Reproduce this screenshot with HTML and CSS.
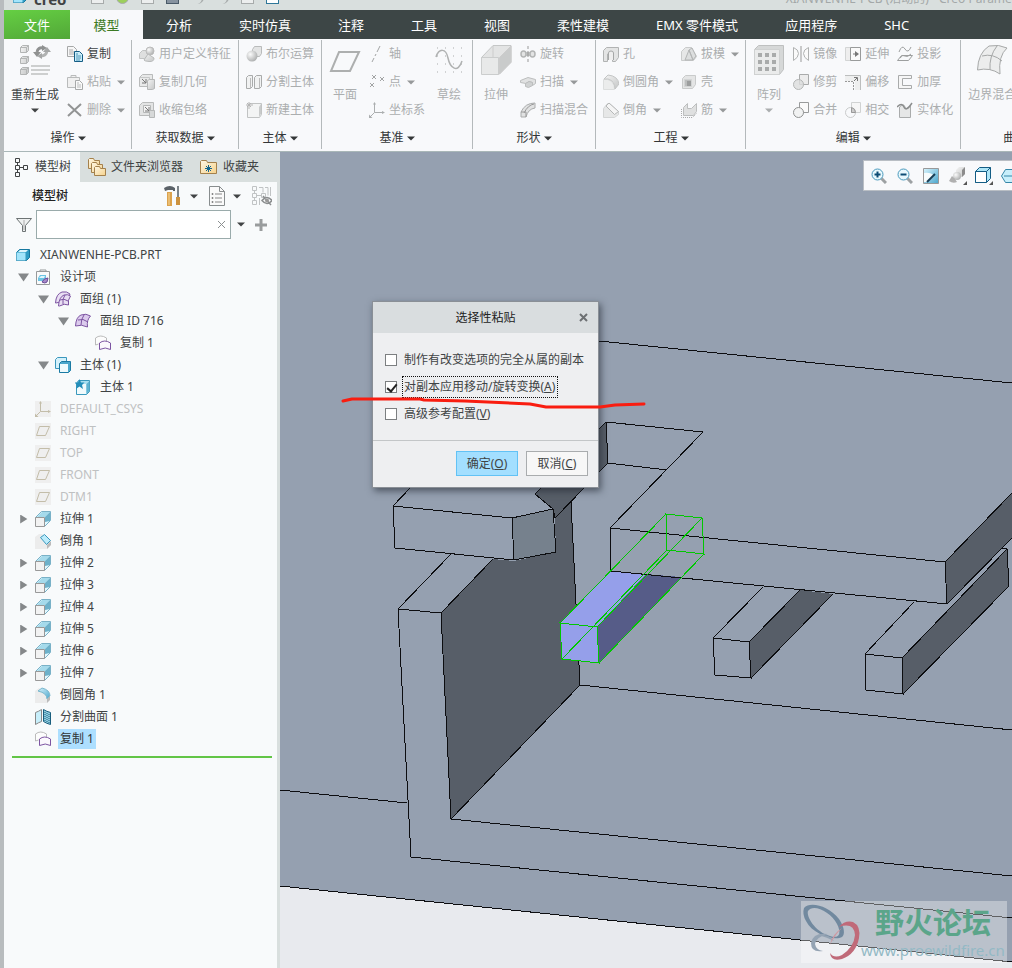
FILE: index.html
```html
<!DOCTYPE html>
<html lang="zh-CN">
<head>
<meta charset="utf-8">
<title>XIANWENHE-PCB (活动的) - Creo Parametric</title>
<link rel="stylesheet" href="styles.css">
</head>
<body>
<svg class="sprite" aria-hidden="true">
  <defs>
    <linearGradient id="g-grey" x1="0" y1="0" x2="1" y2="1"><stop offset="0" stop-color="#f4f4f4"/><stop offset="1" stop-color="#c4c6c6"/></linearGradient>
    <linearGradient id="g-blue" x1="0" y1="0" x2="1" y2="1"><stop offset="0" stop-color="#d8f4fd"/><stop offset="1" stop-color="#4aa5cc"/></linearGradient>
    <linearGradient id="g-fold" x1="0" y1="0" x2="1" y2="1"><stop offset="0" stop-color="#fff7e4"/><stop offset="1" stop-color="#f5d28c"/></linearGradient>
    <radialGradient id="g-ball" cx=".35" cy=".35" r=".7"><stop offset="0" stop-color="#fbfbfb"/><stop offset="1" stop-color="#acaeae"/></radialGradient>
    <symbol id="caret" viewBox="0 0 8 5"><path d="M0 0.500h8L4 4.500z" fill="currentColor"/></symbol>
    <symbol id="regen" viewBox="0 0 32 32"><g fill="url(#g-grey)" stroke="#b3b5b5"><path d="M1.500 3.500l2-2h6v5l-2 2h-6zM1.500 14.500l2-2h6v5l-2 2h-6zM1.500 25.500l2-2h6v5l-2 2h-6z"/><path d="M1.500 3.500h6v5M7.500 3.500l2-2M1.500 14.500h6v5M7.500 14.500l2-2M1.500 25.500h6v5M7.500 25.500l2-2" fill="none"/></g><path d="M12 22h19M12 26h19M12 30h17" stroke="#bfc1c1" stroke-width="1.500"/><path d="M18 8q1-5 6-4" fill="none" stroke="#8f9191" stroke-width="3"/><path d="M14 8h8l-4 5zM23 1l5 3-5 3z" fill="#8f9191"/><path d="M28 7q-1 5-6 5" fill="none" stroke="#b1b3b3" stroke-width="3"/><path d="M24 8l4-5 4 5zM23 9v6l-5-3z" fill="#a5a7a7"/></symbol>
    <symbol id="copy" viewBox="0 0 16 16"><path d="M.5.500h6l3 3v7h-9z" fill="#f7f7f7" stroke="#a6a8a8"/><path d="M2 4h4M2 6h5M2 8h5" stroke="#aaa"/><path d="M7.500 5.500h5l3 3v7h-8z" fill="#c9edf9" stroke="#145d85"/><path d="M9 10h5M9 12h5M9 14h4M9 8h2" stroke="#4f96b7"/></symbol>
    <symbol id="paste" viewBox="0 0 16 16"><path d="M.5 3.500h12v10h-12zM4 3.500v-2h5v2" fill="#f0f0f0" stroke="#b9bbbb"/><path d="M8.500 6.500h4l3 3v6h-7z" fill="#f9f9f9" stroke="#a7a9a9"/><path d="M10 11h4M10 13h4M10 9h2" stroke="#b9bbbb"/></symbol>
    <symbol id="del" viewBox="0 0 16 16"><path d="M1 2l13 12M14 2L1 14" stroke="#929494" stroke-width="2"/></symbol>
    <symbol id="udf" viewBox="0 0 16 16"><path d="M.5 7.500l3-3h5v5l-3 3h-5z" fill="#dedfdf" stroke="#c1c3c3"/><circle cx="11" cy="5" r="4" fill="url(#g-ball)" stroke="#bbb"/><path d="M5 14l4-6 6 4q0 4-5 3.500T5 14z" fill="url(#g-grey)" stroke="#b8baba"/></symbol>
    <symbol id="copygeo" viewBox="0 0 16 16"><path d="M.5 3.500l3-3h10v9l-3 3h-10z" fill="#e8e9e9" stroke="#b9bbbb"/><path d="M.5 3.500h10v9" fill="none" stroke="#c5c7c7"/><path d="M3 5l4 4M7 5v4H3" stroke="#777" fill="none"/><path d="M8.500 6.500l2-1h5v9l-2 1h-5z" fill="url(#g-grey)" stroke="#b5b7b7"/></symbol>
    <symbol id="shrink" viewBox="0 0 16 16"><path d="M.5 3.500l3-3h11v10l-3 3h-11z" fill="#e3e4e4" stroke="#b9bbbb"/><path d="M4.500 3.500h7v7h-7z" fill="#f3f3f3" stroke="#b5b7b7"/><path d="M6 5l4 4M10 5v4H6" stroke="#777" fill="none"/><path d="M10.500 9.500l1-1h4v7h-5z" fill="#d7d9d9" stroke="#b5b7b7"/></symbol>
    <symbol id="bool" viewBox="0 0 16 16"><path d="M6.500 3.500l2-3h7v7l-2 3h-7z" fill="#e3e4e4" stroke="#b9bbbb"/><circle cx="6" cy="10" r="5.500" fill="url(#g-ball)"/></symbol>
    <symbol id="split" viewBox="0 0 16 16"><path d="M.5 3.500l2-2h4v11l-2 2h-4zM8.500 3.500l2-2h5v11l-2 2h-5z" fill="#f1f2f2" stroke="#a9abab"/><path d="M4.500 4v10M13.500 4v10" stroke="#bbb"/></symbol>
    <symbol id="newbody" viewBox="0 0 16 16"><path d="M1.500 4.500l2-3h12v11l-2 3h-12z" fill="#f3f4f4" stroke="#c1c3c3"/><path d="M13 5l2-3v10l-2 3z" fill="#c9cbcb"/><path d="M3 0v7M0 3h7M1 1l4 4M5 1L1 5" stroke="#b5b5b5"/></symbol>
    <symbol id="plane" viewBox="0 0 32 32"><path d="M10 8h20l-9 19H2z" fill="none" stroke="#adafaf" stroke-width="2"/></symbol>
    <symbol id="axis" viewBox="0 0 16 16"><path d="M11 0L8 6M7 8l-1 2M5 12l-2 4" stroke="#a2a4a4"/></symbol>
    <symbol id="points" viewBox="0 0 16 16"><path d="M3 1l4 4M7 1L3 5M11 3l4 4M15 3l-4 4M1 9l4 4M5 9l-4 4" stroke="#a2a4a4"/></symbol>
    <symbol id="csys" viewBox="0 0 16 16"><path d="M5.500 1v9.500H15M5.500 10.500L1 15" stroke="currentColor" fill="none"/><path d="M4 2.500l1.500-2.500L7 2.500zM13 9l3 1.500-3 1.500zM0 16v-3.500L3.500 16z" fill="currentColor"/></symbol>
    <symbol id="sketch" viewBox="0 0 32 32"><path d="M4 4h26M4 12h26M4 20h26M4 28h26" stroke="#a9abab" stroke-dasharray="1 7"/><path d="M3 13C6 4 13 4 15 14s10 16 14 3" fill="none" stroke="#b0b2b2" stroke-width="1.500"/></symbol>
    <symbol id="extrude" viewBox="0 0 32 32"><path d="M1.500 13.500L13 1.500h18v17l-12 12z" fill="#e3e4e4" stroke="#c5c7c7"/><path d="M13 2v12M31 2L19.500 13.500V30L31 18z" fill="#c9cbcb" stroke="#ccc"/><path d="M1.500 13.500h17v17h-17z" fill="#e8e9e9" stroke="#cbcdcd"/></symbol>
    <symbol id="revolve" viewBox="0 0 16 16"><ellipse cx="3.500" cy="8" rx="2.500" ry="3" fill="#e3e4e4" stroke="#b3b5b5" stroke-width="1.500"/><ellipse cx="12.500" cy="8" rx="2.500" ry="3" fill="#e3e4e4" stroke="#b3b5b5" stroke-width="1.500"/><path d="M6 6h4v4H6z" fill="#bcbebe"/><path d="M8 0v3M8 5v6M8 13v3" stroke="#999"/></symbol>
    <symbol id="sweep" viewBox="0 0 16 16"><path d="M.5 6.500L8 3.500l7.500 2v4l-3 2v-3L9 7.500l-3 2-5.500-1z" fill="#e1e2e2" stroke="#bcbebe"/><path d="M5.500 9.500v3l3 1 4-2v-3l-3.500-1z" fill="#d0d2d2" stroke="#bcbebe"/></symbol>
    <symbol id="blend" viewBox="0 0 16 16"><path d="M1 10Q5 1 15 1v5Q8 7 6 15H1z" fill="#e1e2e2" stroke="#aaacac"/><path d="M4 11Q8 3 14 2M1 10h5v5" fill="none" stroke="#999"/></symbol>
    <symbol id="hole" viewBox="0 0 16 16"><path d="M.5 4.500l3-3h12v10l-3 4h-3V8H4.500v7.500h-4z" fill="#e3e4e4" stroke="#b1b3b3"/><path d="M5.500 14V7q0-2 2.500-2t2.500 2v7" fill="#eee" stroke="#a5a7a7"/></symbol>
    <symbol id="roundg" viewBox="0 0 16 16"><path d="M.5 5.500h4q7 2 7 10h-11z" fill="#ebecec" stroke="#dcdede"/><path d="M1 5l4-4q10 1 11 9l-4 5q0-8-7-10z" fill="url(#g-grey)" stroke="#c3c5c5"/></symbol>
    <symbol id="chamg" viewBox="0 0 16 16"><path d="M.5 6.500l4-5h2l9 8v3l-4 3h-11z" fill="#e6e7e7" stroke="#d3d5d5"/><path d="M6 1l9.500 8.500-4 3L3 4z" fill="#f5f5f5" stroke="#b5b7b7"/></symbol>
    <symbol id="draft" viewBox="0 0 16 16"><path d="M.5 5.500l4-4h6l5 9-3 4H.5z" fill="#e6e7e7" stroke="#c9cbcb"/><path d="M4 14L8 4l4 10zM8 4l3-2 4 8-3 4z" fill="#dcdede" stroke="#b3b5b5"/></symbol>
    <symbol id="shell" viewBox="0 0 16 16"><path d="M1.500 4.500l3-3h10v9l-3 4h-10z" fill="#e4e5e5" stroke="#c9cbcb"/><path d="M3.500 5.500h7v7h-7z" fill="#bcbebe" stroke="#d3d5d5"/><path d="M6 7h4v5H6z" fill="#9c9e9e"/></symbol>
    <symbol id="rib" viewBox="0 0 16 16"><path d="M.5 7v8.500h11l4-4" fill="none" stroke="#aaa" stroke-dasharray="1 1"/><path d="M2.500 12V5.500l4-4v5h4l5-5v8l-3 4h-10z" fill="#dfe0e0" stroke="#bcbebe"/></symbol>
    <symbol id="pattern" viewBox="0 0 32 32"><path d="M1.500 5.500l4-4h25v24l-4 5h-25z" fill="#d6d8d8" stroke="#bec0c0"/><path d="M1.500 5.500h25v25h-25z" fill="#eaebeb" stroke="#cfd1d1"/><g fill="#a9abab"><path d="M5 9h4v4H5zM12 9h4v4h-4zM19 9h4v4h-4zM5 16h4v4H5zM12 16h4v4h-4zM19 16h4v4h-4zM5 23h4v4H5zM12 23h4v4h-4zM19 23h4v4h-4z"/></g></symbol>
    <symbol id="mirror" viewBox="0 0 16 16"><path d="M.5 1.500q5 2 5 6t-5 7zM15.500 1.500q-5 2-5 6t5 7z" fill="#fafafa" stroke="#b0b2b2"/><path d="M8 0v16" stroke="#999"/></symbol>
    <symbol id="trim" viewBox="0 0 16 16"><path d="M6.500.5h9v10h-9z" fill="#ececec" stroke="#a9abab"/><circle cx="5.500" cy="10.500" r="5" fill="#dcdddd" fill-opacity=".8" stroke="#b4b6b6"/></symbol>
    <symbol id="merge" viewBox="0 0 16 16"><path d="M6.500.5h9v10h-9z" fill="#fafafa" stroke="#999b9b"/><circle cx="5.500" cy="10.500" r="5" fill="#f1f2f2" stroke="#8f9191"/></symbol>
    <symbol id="inter" viewBox="0 0 16 16"><path d="M6.500.5h9v10h-9z" fill="#f6f6f6" stroke="#d0d2d2"/><circle cx="5.500" cy="10.500" r="5" fill="none" stroke="#c9cbcb"/><path d="M6.500 5.500q4 1 4 5h-4z" fill="#ccc" stroke="#999"/></symbol>
    <symbol id="extend" viewBox="0 0 16 16"><path d="M.5 1.500h5v13h-5z" fill="#eee" stroke="#d3d5d5"/><path d="M5.500 1.500h10v13h-10z" fill="#fafafa" stroke="#999b9b"/><path d="M8 8h4" stroke="#777"/><path d="M10 5l4 3-4 3z" fill="#777"/></symbol>
    <symbol id="offset" viewBox="0 0 16 16"><path d="M0 1h15v15h-5V7H0z" fill="#eeefef"/><path d="M0 1.500h15.500V16" fill="none" stroke="#bcbebe"/><path d="M0 7.500h8.500V16" fill="none" stroke="#999" stroke-dasharray="2 1"/><path d="M9 7l3-3M9 3.500h3.500V7" stroke="#777" fill="none"/></symbol>
    <symbol id="project" viewBox="0 0 16 16"><path d="M2 6q3-8 6-3t6-2M.5 14.500h11l4-5h-11zM3 12q3-4 5-2t6-2" fill="none" stroke="#9d9f9f"/></symbol>
    <symbol id="thick" viewBox="0 0 16 16"><path d="M14.500 1.500h-13v13h13v-3h-9v-7h9z" fill="#f6f6f6" stroke="#a9abab"/></symbol>
    <symbol id="solid" viewBox="0 0 16 16"><path d="M2.500 5v10.500h11V4Q9 9 8 5T2.500 5z" fill="#e6e7e7" stroke="#aaacac"/><path d="M0 5q5-5 7 0t8-4" fill="none" stroke="#8b8d8d" stroke-width="1.500"/></symbol>
    <symbol id="bound" viewBox="0 0 32 32"><path d="M1.500 26Q2 9 13 2q10-2 18 2-9 8-7 26-10-7-22.500-4z" fill="#eceded" stroke="#a6a8a8"/><path d="M6 12q11-3 20 5M21 2q-8 10-7 24" fill="none" stroke="#a6a8a8"/></symbol>
    <symbol id="treeic" viewBox="0 0 14 20"><path d="M1.500 1.500h4v4h-4zM1.500 8.500h4v4h-4zM1.500 15.500h4v4h-4zM9.500 8.500h4v4h-4zM3.500 6v2M3.500 13v2M6 10.500h3" fill="none" stroke="currentColor"/></symbol>
    <symbol id="folders" viewBox="0 0 20 20"><g fill="url(#g-fold)" stroke="#a4814c"><path d="M1.500 2.500l1-1h4l1 2h5v8h-11z"/><path d="M4.500 6.500l1-1h4l1 2h5v8h-11z"/><path d="M7.500 10.500l1-1h4l1 2h5v7h-11z"/></g></symbol>
    <symbol id="fav" viewBox="0 0 18 16"><path d="M.5 2.500l1-1h5l1 2h9v11h-16z" fill="url(#g-fold)" stroke="#a4814c"/><path d="M8.500 6v7M5 9.500h7M6 7l5 5M11 7l-5 5" stroke="#14658c"/></symbol>
    <symbol id="tools" viewBox="0 0 18 20"><path d="M0 2q6-4 11 0v3H9V4H4L1 5z" fill="#5b6268"/><path d="M3 6h5v14H3z" fill="#dba24d"/><path d="M5 7v12" stroke="#f8d797"/><path d="M14 0v11" stroke="#7c8489" stroke-width="2"/><path d="M12 11h4v8h-4z" fill="#cc923f"/></symbol>
    <symbol id="report" viewBox="0 0 16 20"><path d="M.5.500h10l5 5v14H.5z" fill="#fafafa" stroke="#888d8e"/><path d="M10.500.5v5h5" fill="none" stroke="#888d8e"/><path d="M6 8h7M6 12h7M6 16h7" stroke="#888"/><path d="M3 7.500h1v1H3zM3 11.500h1v1H3zM3 15.500h1v1H3z" fill="none" stroke="#888"/></symbol>
    <symbol id="hidetree" viewBox="0 0 20 20"><g fill="none" stroke="#c0c3c4"><path d="M.5.500h4v4h-4zM.5 7.500h4v4h-4zM.5 14.500h4v4h-4zM9.500 7.500h4v4h-4zM2.500 5v2M2.500 12v2M5 9.500h4M7 1.500h4v5M13 1.500h3v8M18.500 1v9M7.500 12v7"/></g><path d="M10 14.500q5-6 10 0-5 6-10 0zM11 10l8 9" fill="none" stroke="#8b8e8f" stroke-width="1.500"/><circle cx="15" cy="14.500" r="2" fill="#999"/></symbol>
    <symbol id="funnel" viewBox="0 0 16 16"><path d="M.5 1.500h15l-6 7v6h-3v-6z" fill="#eef0f0" stroke="#6d7374"/><path d="M8 3v10" stroke="#aaa"/></symbol>
    <symbol id="part" viewBox="0 0 14 14"><path d="M.5 4.500l3-3h10v8l-3 3h-10z" fill="#2f9cc4" stroke="#17789f"/><path d="M.5 4.500h9v8h-9z" fill="#a3e5fb"/><path d="M2 4l2-2h8l-2 2z" fill="#dff6fd"/></symbol>
    <symbol id="design" viewBox="0 0 16 16"><path d="M1.500 2.500h13v13h-13z" fill="#fafafa" stroke="#979a9b"/><path d="M5 3V1h6v2" fill="none" stroke="#979a9b"/><path d="M3 9l2-3h6v4l-2 2H3z" fill="#6cc4e4"/><path d="M4 9l2-2h4l-1 2z" fill="#e1f6fc"/><path d="M7 13q2-4 6-4l-1 4q-2 2-5 0z" fill="#a58ac6" stroke="#6c4b98"/></symbol>
    <symbol id="quilts" viewBox="0 0 16 16"><g fill="#e9dff3" stroke="#7d55a2"><path d="M.5 12Q1 3 7 1q5-1 8 2-3 4-2 9-6-3-12 0z"/><path d="M3.500 15Q4 6 9 4q4-1 6.500 1-3 4-2 9-4-2-9 1z"/><path d="M5 9q4-2 8 1M10 4q-3 4-2 9" fill="none"/></g></symbol>
    <symbol id="quilt" viewBox="0 0 16 16"><path d="M.5 13Q1 4 6 2q5-2 9.500 1-4 4-3 11-6-3-12-1z" fill="#dccbed" stroke="#7d55a2"/><path d="M3 7q5-2 10 2M9 2q-3 4-3 10" fill="none" stroke="#7d55a2"/></symbol>
    <symbol id="copysurf" viewBox="0 0 16 16"><path d="M.5 10V3q5-4 11 0v3" fill="#fcfcfc" stroke="#bbb"/><path d="M.5 10l3-1" stroke="#bbb"/><path d="M4.500 14.500V8q5-4 11 0v6.500q-5-3-11 0z" fill="#fbf8fd" stroke="#7d55a2"/></symbol>
    <symbol id="bodies" viewBox="0 0 16 16"><path d="M.5 2.500l2-2h9v9l-2 2h-9z" fill="#d4f1fb" stroke="#3b97bd"/><path d="M4.500 6.500l2-2h9v9l-2 2h-9z" fill="#4aa7cc" stroke="#1b7aa3"/><path d="M5 7h8v8H5z" fill="#eefafd"/></symbol>
    <symbol id="body" viewBox="0 0 16 16"><path d="M1.500 4.500l2-3h11v11l-3 3h-10z" fill="#a9dff0" stroke="#3a98bc"/><path d="M2 5h9v10H2z" fill="#f1fafc"/><path d="M11.500 5l3-3v10l-3 3z" fill="#5fb2d0"/><path d="M4.500 0L6 3.500h3.500L7 6l1 4-3.500-2.500L1 10l1-4-2.500-2.500H3z" fill="#248eb9"/></symbol>
    <symbol id="datum" viewBox="0 0 16 16"><path d="M0 0h16v16H0z" fill="#efefef"/><path d="M4.500 3.500h10l-4 9h-9z" fill="none" stroke="#c3bda9"/></symbol>
    <symbol id="feat" viewBox="0 0 16 16"><path d="M.5 6.500l6-6h9v9l-6 6z" fill="#e3f8fe" stroke="#79b1c7"/><path d="M2 6l5-5h8l-5 5z" fill="#a5daeb"/><path d="M10 6l5-5v9l-5 1z" fill="#6db1ca"/><path d="M.5 6.500h9v9h-9z" fill="#f2f2f2" stroke="#999"/></symbol>
    <symbol id="cham" viewBox="0 0 16 16"><path d="M0 4l4-3h3l9 9v2l-4 4H0z" fill="#ececec"/><path d="M5.500 4.500l4-3 6 6-4 4z" fill="#bcecfb" stroke="#3b97bd"/><path d="M12 12l4-4v4l-4 4z" fill="#bbb"/></symbol>
    <symbol id="round" viewBox="0 0 16 16"><path d="M0 4l4-3 11 8v3l-3 4H0z" fill="#ececec"/><path d="M3 4l4-3q8 2 8 8l-3 3Q12 6 3 4z" fill="url(#g-blue)" stroke="#7ab7cd"/><path d="M12 12l3-3v4l-3 3z" fill="#bbb"/></symbol>
    <symbol id="splits" viewBox="0 0 16 16"><path d="M.5 3.500q3-1 6-3v12q-3 1-6 3z" fill="#c8effb" stroke="#888"/><path d="M8.500.500q3 2 7 3v12q-4-1-7-3z" fill="#8ecbde" stroke="#195d7d"/><path d="M10 3v10M12 4v10M14 5v9" stroke="#155c7c" stroke-dasharray="1 1"/></symbol>
    <symbol id="zoomin" viewBox="0 0 16 16"><path d="M10 10l5 5" stroke="#9da1a3" stroke-width="3"/><circle cx="6.500" cy="6.500" r="5.500" fill="#e8f8fd" stroke="#4a9abd"/><path d="M6.500 3.500v6M3.500 6.500h6" stroke="#0d4c74" stroke-width="2"/></symbol>
    <symbol id="zoomout" viewBox="0 0 16 16"><path d="M10 10l5 5" stroke="#9da1a3" stroke-width="3"/><circle cx="6.500" cy="6.500" r="5.500" fill="#e8f8fd" stroke="#4a9abd"/><path d="M3.500 6.500h6" stroke="#0d4c74" stroke-width="2"/></symbol>
    <symbol id="repaint" viewBox="0 0 16 16"><path d="M.5.500h15v15H.5z" fill="url(#g-blue)" stroke="#999"/><path d="M1 5q7-1 10 3l-6 6H1z" fill="#f7fcfd"/><path d="M4 14l8-8" stroke="#173d54" stroke-width="2"/></symbol>
    <symbol id="shade" viewBox="0 0 18 18"><path d="M7 3l3-3h6v7l-3 3H7z" fill="url(#g-grey)"/><path d="M13 3l3-3v7l-3 3z" fill="#8c8c8c"/><circle cx="8" cy="9" r="4" fill="url(#g-ball)"/><path d="M0 14l3-5 3 3 2 3q-4 2-8-1z" fill="#b0b0b0"/><path d="M18 14v4h-4z" fill="#555"/></symbol>
    <symbol id="views" viewBox="0 0 18 18"><path d="M.5 4.500l4-4h11v11l-4 4H.5z" fill="#aee6f8" stroke="#145d85"/><path d="M.5 4.500h11v11H.5z" fill="#fff" stroke="#145d85"/><path d="M11.500 4.500l4-4" stroke="#145d85"/><path d="M18 14v4h-4z" fill="#555"/></symbol>
    <symbol id="hex" viewBox="0 0 18 16"><path d="M.5 8l4-6.500h10l3 6.500-3 6.500h-10z" fill="#c8effb" stroke="#3586a8"/><path d="M3 8h14M13.500 1v14" stroke="#3586a8"/></symbol>
  </defs>
</svg>

<div class="app">
  <header class="titlebar">
    <svg class="i14"><use href="#part"/></svg>
    <span class="brand">creo</span>
    <span class="quick">
      <i class="q page"></i><i class="q ok"></i><i class="q page"></i><i class="q save"></i><i class="q arc"></i><i class="q arc"></i><i class="q page"></i><i class="q win"></i>
    </span>
    <span class="doc">XIANWENHE-PCB (活动的) - Creo Parametric</span>
  </header>

  <nav class="tabs">
    <button class="tab file">文件</button>
    <button class="tab active">模型</button>
    <div class="rest">
      <button class="tab">分析</button><button class="tab">实时仿真</button><button class="tab">注释</button><button class="tab">工具</button><button class="tab">视图</button><button class="tab">柔性建模</button><button class="tab">EMX 零件模式</button><button class="tab">应用程序</button><button class="tab">SHC</button>
    </div>
  </nav>

  <section class="ribbon">
    <div class="group snug">
      <div class="body">
        <button class="big"><svg class="i32"><use href="#regen"/></svg>重新生成<svg class="caret"><use href="#caret"/></svg></button>
        <div class="col">
          <button class="tool"><svg class="i16"><use href="#copy"/></svg>复制</button>
          <button class="tool" disabled><svg class="i16"><use href="#paste"/></svg>粘贴<svg class="caret"><use href="#caret"/></svg></button>
          <button class="tool" disabled><svg class="i16"><use href="#del"/></svg>删除<svg class="caret"><use href="#caret"/></svg></button>
        </div>
      </div>
      <button class="name">操作<svg class="caret"><use href="#caret"/></svg></button>
    </div>
    <div class="group">
      <div class="body">
        <div class="col">
          <button class="tool" disabled><svg class="i16"><use href="#udf"/></svg>用户定义特征</button>
          <button class="tool" disabled><svg class="i16"><use href="#copygeo"/></svg>复制几何</button>
          <button class="tool" disabled><svg class="i16"><use href="#shrink"/></svg>收缩包络</button>
        </div>
      </div>
      <button class="name">获取数据<svg class="caret"><use href="#caret"/></svg></button>
    </div>
    <div class="group">
      <div class="body">
        <div class="col">
          <button class="tool" disabled><svg class="i16"><use href="#bool"/></svg>布尔运算</button>
          <button class="tool" disabled><svg class="i16"><use href="#split"/></svg>分割主体</button>
          <button class="tool" disabled><svg class="i16"><use href="#newbody"/></svg>新建主体</button>
        </div>
      </div>
      <button class="name">主体<svg class="caret"><use href="#caret"/></svg></button>
    </div>
    <div class="group">
      <div class="body">
        <button class="big" disabled><svg class="i32"><use href="#plane"/></svg>平面</button>
        <div class="col">
          <button class="tool" disabled><svg class="i16"><use href="#axis"/></svg>轴</button>
          <button class="tool" disabled><svg class="i16"><use href="#points"/></svg>点<svg class="caret"><use href="#caret"/></svg></button>
          <button class="tool" disabled><svg class="i16"><use href="#csys"/></svg>坐标系</button>
        </div>
        <button class="big" disabled><svg class="i32"><use href="#sketch"/></svg>草绘</button>
      </div>
      <button class="name">基准<svg class="caret"><use href="#caret"/></svg></button>
    </div>
    <div class="group">
      <div class="body">
        <button class="big" disabled><svg class="i32"><use href="#extrude"/></svg>拉伸</button>
        <div class="col">
          <button class="tool" disabled><svg class="i16"><use href="#revolve"/></svg>旋转</button>
          <button class="tool" disabled><svg class="i16"><use href="#sweep"/></svg>扫描<svg class="caret"><use href="#caret"/></svg></button>
          <button class="tool" disabled><svg class="i16"><use href="#blend"/></svg>扫描混合</button>
        </div>
      </div>
      <button class="name">形状<svg class="caret"><use href="#caret"/></svg></button>
    </div>
    <div class="group snug">
      <div class="body">
        <div class="col">
          <button class="tool" disabled><svg class="i16"><use href="#hole"/></svg>孔</button>
          <button class="tool" disabled><svg class="i16"><use href="#roundg"/></svg>倒圆角<svg class="caret"><use href="#caret"/></svg></button>
          <button class="tool" disabled><svg class="i16"><use href="#chamg"/></svg>倒角<svg class="caret"><use href="#caret"/></svg></button>
        </div>
        <div class="col">
          <button class="tool" disabled><svg class="i16"><use href="#draft"/></svg>拔模<svg class="caret"><use href="#caret"/></svg></button>
          <button class="tool" disabled><svg class="i16"><use href="#shell"/></svg>壳</button>
          <button class="tool" disabled><svg class="i16"><use href="#rib"/></svg>筋<svg class="caret"><use href="#caret"/></svg></button>
        </div>
      </div>
      <button class="name">工程<svg class="caret"><use href="#caret"/></svg></button>
    </div>
    <div class="group">
      <div class="body">
        <button class="big" disabled><svg class="i32"><use href="#pattern"/></svg>阵列<svg class="caret"><use href="#caret"/></svg></button>
        <div class="col">
          <button class="tool" disabled><svg class="i16"><use href="#mirror"/></svg>镜像</button>
          <button class="tool" disabled><svg class="i16"><use href="#trim"/></svg>修剪</button>
          <button class="tool" disabled><svg class="i16"><use href="#merge"/></svg>合并</button>
        </div>
        <div class="col">
          <button class="tool" disabled><svg class="i16"><use href="#extend"/></svg>延伸</button>
          <button class="tool" disabled><svg class="i16"><use href="#offset"/></svg>偏移</button>
          <button class="tool" disabled><svg class="i16"><use href="#inter"/></svg>相交</button>
        </div>
        <div class="col">
          <button class="tool" disabled><svg class="i16"><use href="#project"/></svg>投影</button>
          <button class="tool" disabled><svg class="i16"><use href="#thick"/></svg>加厚</button>
          <button class="tool" disabled><svg class="i16"><use href="#solid"/></svg>实体化</button>
        </div>
      </div>
      <button class="name">编辑<svg class="caret"><use href="#caret"/></svg></button>
    </div>
    <div class="group wide">
      <div class="body">
        <button class="big" disabled><svg class="i32"><use href="#bound"/></svg>边界混合</button>
      </div>
      <button class="name">曲面<svg class="caret"><use href="#caret"/></svg></button>
    </div>
  </section>

  <main class="work">
    <aside class="side">
      <div class="side-tabs">
        <button class="side-tab active"><svg class="i14x20"><use href="#treeic"/></svg>模型树</button>
        <button class="side-tab"><svg class="i20"><use href="#folders"/></svg>文件夹浏览器</button>
        <button class="side-tab fav"><svg class="i18x16"><use href="#fav"/></svg>收藏夹</button>
      </div>
      <div class="side-head">
        <h2>模型树</h2>
        <button class="plain" aria-label="设置"><svg class="i18x20"><use href="#tools"/></svg><svg class="caret"><use href="#caret"/></svg></button>
        <button class="plain" aria-label="显示"><svg class="i16x20"><use href="#report"/></svg><svg class="caret"><use href="#caret"/></svg></button>
        <button class="plain" aria-label="隐藏"><svg class="i20"><use href="#hidetree"/></svg></button>
      </div>
      <div class="filter">
        <svg class="i16"><use href="#funnel"/></svg>
        <div class="search"><input type="text" aria-label="过滤"><button class="plain" aria-label="清除"><svg class="i9" viewBox="0 0 9 9"><path d="M1 1l7 7M8 1L1 8" stroke="#8c9091"/></svg></button></div>
        <button class="plain" aria-label="过滤选项"><svg class="caret"><use href="#caret"/></svg></button>
        <button class="plain" aria-label="添加"><svg class="i12" viewBox="0 0 12 12"><path d="M6 0v12M0 6h12" stroke="#999c9d" stroke-width="3"/></svg></button>
      </div>
      <ul class="tree">
        <li class="root"><svg class="i14"><use href="#part"/></svg><span>XIANWENHE-PCB.PRT</span></li>
        <li><i class="open"></i><svg class="i16"><use href="#design"/></svg><span>设计项</span></li>
        <li class="l2"><i class="open"></i><svg class="i16"><use href="#quilts"/></svg><span>面组 (1)</span></li>
        <li class="l3"><i class="open"></i><svg class="i16"><use href="#quilt"/></svg><span>面组 ID 716</span></li>
        <li class="l4"><i></i><svg class="i16"><use href="#copysurf"/></svg><span>复制 1</span></li>
        <li class="l2"><i class="open"></i><svg class="i16"><use href="#bodies"/></svg><span>主体 (1)</span></li>
        <li class="l3"><i></i><svg class="i16"><use href="#body"/></svg><span>主体 1</span></li>
        <li class="off"><i></i><svg class="i16 csys"><use href="#csys"/></svg><span>DEFAULT_CSYS</span></li>
        <li class="off"><i></i><svg class="i16"><use href="#datum"/></svg><span>RIGHT</span></li>
        <li class="off"><i></i><svg class="i16"><use href="#datum"/></svg><span>TOP</span></li>
        <li class="off"><i></i><svg class="i16"><use href="#datum"/></svg><span>FRONT</span></li>
        <li class="off"><i></i><svg class="i16"><use href="#datum"/></svg><span>DTM1</span></li>
        <li><i class="shut"></i><svg class="i16"><use href="#feat"/></svg><span>拉伸 1</span></li>
        <li><i></i><svg class="i16"><use href="#cham"/></svg><span>倒角 1</span></li>
        <li><i class="shut"></i><svg class="i16"><use href="#feat"/></svg><span>拉伸 2</span></li>
        <li><i class="shut"></i><svg class="i16"><use href="#feat"/></svg><span>拉伸 3</span></li>
        <li><i class="shut"></i><svg class="i16"><use href="#feat"/></svg><span>拉伸 4</span></li>
        <li><i class="shut"></i><svg class="i16"><use href="#feat"/></svg><span>拉伸 5</span></li>
        <li><i class="shut"></i><svg class="i16"><use href="#feat"/></svg><span>拉伸 6</span></li>
        <li><i class="shut"></i><svg class="i16"><use href="#feat"/></svg><span>拉伸 7</span></li>
        <li><i></i><svg class="i16"><use href="#round"/></svg><span>倒圆角 1</span></li>
        <li><i></i><svg class="i16"><use href="#splits"/></svg><span>分割曲面 1</span></li>
        <li class="picked"><i></i><svg class="i16"><use href="#copysurf"/></svg><span>复制 1</span></li>
      </ul>
    </aside>

    <section class="view">
      <svg class="scene" viewBox="280 152 732 816" preserveAspectRatio="xMinYMin slice" shape-rendering="crispEdges" aria-hidden="true">
        <path d="M280 886L1012 962V968H280z" fill="#e8eaee"/>
        <g fill="#575e68">
          <path d="M441 613L493 559L514 561L556 552L555 518L553 509L535 494L542 487H585L571 502L580 685L451 819z"/>
          <path d="M598 430L606 422L608 463L598 473z"/>
          <path d="M945 562L1012 493V538L947 604z"/>
          <path d="M902 658L1007 549L1009 586L903 694z"/>
          <path d="M749 642L800 590L833 594L751 678z"/>
        </g>
        <path d="M393 506L512 518L514 560L395 548z" fill="#95a0b0"/>
        <path d="M512 518L553 509L556 552L514 560z" fill="#76818d"/>
        <g fill="none" stroke="#0c0d10">
          <path d="M280 886L1012 962M411 857L1012 918M280 790L407 803M451 819L1012 876M580 685L1012 730"/>
          <path d="M451 554L398 609L411 857M398 609L441 613L493 559M441 613L451 819L580 685L571 502M585 487L555 518L553 509L535 494L542 487"/>
          <path d="M411 487L393 506L395 548L514 560L512 518L393 506M512 518L553 509L556 552L514 560"/>
          <path d="M599 341L1012 383M598 430L606 422L703 432L610 528L611 571L947 604L945 562L610 528M606 422L608 463L598 473M608 463L667 470"/>
          <path d="M945 562L1012 493M947 604L1012 538"/>
          <path d="M914 602L865 654L866 690L903 694L902 658L865 654M902 658L1007 549L1009 586L903 694M1007 549L1001 548"/>
          <path d="M763 587L713 638L715 675L751 678L749 642L713 638M749 642L800 590M833 594L751 678"/>
        </g>
        <path d="M560 623L611 571L646 574L597 627L599 663L562 659z" fill="#959fea"/>
        <path d="M597 627L646 574L681 577L599 663z" fill="#565c88"/>
        <path d="M611 571L681 578" stroke="#0c0d10"/>
        <path d="M560 623L597 627L599 663L562 659zM666 514L702 518L704 554L667 550zM560 623L666 514M597 627L702 518M599 663L704 554M562 659L667 550" fill="none" stroke="#00c800"/>
      </svg>

      <div class="viewbar">
        <button class="plain" aria-label="放大"><svg class="i16"><use href="#zoomin"/></svg></button>
        <button class="plain" aria-label="缩小"><svg class="i16"><use href="#zoomout"/></svg></button>
        <button class="plain" aria-label="重画"><svg class="i16"><use href="#repaint"/></svg></button>
        <button class="plain" aria-label="显示样式"><svg class="i18"><use href="#shade"/></svg></button>
        <button class="plain" aria-label="已保存方向"><svg class="i18"><use href="#views"/></svg></button>
        <button class="plain" aria-label="视图管理器"><svg class="i18x16"><use href="#hex"/></svg></button>
      </div>

      <form class="dialog" role="dialog" aria-labelledby="dlg-title">
        <div class="dlg-head"><h1 id="dlg-title">选择性粘贴</h1><button type="button" class="plain" aria-label="关闭"><svg class="i9" viewBox="0 0 9 9"><path d="M1 1l7 7M8 1L1 8" stroke="#6d7073" stroke-width="2"/></svg></button></div>
        <div class="dlg-body">
          <label><input type="checkbox"><span>制作有改变选项的完全从属的副本</span></label>
          <label><input type="checkbox" checked><span class="focus">对副本应用移动/旋转变换(<u>A</u>)</span></label>
          <label><input type="checkbox"><span>高级参考配置(<u>V</u>)</span></label>
        </div>
        <div class="dlg-foot"><button type="button" class="btn primary">确定(<u>O</u>)</button><button type="button" class="btn">取消(<u>C</u>)</button></div>
      </form>

      <svg class="mark" viewBox="0 0 306 14" aria-hidden="true"><path d="M3 5L12 3L80 3L84 4L125 5L190 8L206 11L260 11L275 9L304 8" fill="none" stroke="#f91d10" stroke-width="3" stroke-linecap="round" stroke-linejoin="round"/></svg>

      <div class="stamp">
        <svg viewBox="0 0 60 62" aria-hidden="true"><path fill-rule="evenodd" fill="#71899f" d="M3 7C9 0 28 5 38 18C44 27 44 34 41 36C34 40 12 34 5 20Q1 13 3 7zM7 10C5 15 14 31 29 35C38 38 41 33 36 23C30 11 12 2 7 10z"/><path d="M10 42Q12 31 27 33Q15 36 14 43Q15 49 22 50Q10 52 10 42zM20 35Q27 32 33 40Q25 36 20 35z" fill="#94a3b3"/><path fill="#c06a79" d="M38 26Q44 19 52 21Q60 25 58 37Q55 53 41 58Q30 61 29 52Q33 58 41 54Q53 46 54 34Q53 21 38 26z"/><path d="M29 44Q31 33 41 27Q33 35 29 44z" fill="#cf97a1"/></svg>
        <div class="words"><strong>野火论坛</strong><span>www.proewildfire.cn</span></div>
      </div>
    </section>
  </main>
</div>
</body>
</html>
```
FILE: styles.css
```css
* { box-sizing: border-box; }
body {
  margin: 0;
  font: 12px/16px "Noto Sans", "Noto Sans CJK SC", sans-serif;
  color: #404344;
  background: #f8f9fb;
}
button, input { font: inherit; color: inherit; }
button {
  border: 0;
  padding: 0;
  background: none;
  white-space: nowrap;
}
button:disabled { color: #abaeaf; }
svg { display: block; flex: none; }
.sprite { position: absolute; width: 0; height: 0; }
.app {
  display: flex;
  flex-direction: column;
  height: 100vh;
  border-left: 4px solid #b8bcbe;
  overflow: hidden;
}

.i9 { width: 9px; height: 9px; }
.i12 { width: 12px; height: 12px; }
.i14 { width: 14px; height: 14px; }
.i16 { width: 16px; height: 16px; }
.i18 { width: 18px; height: 18px; }
.i20 { width: 20px; height: 20px; }
.i32 { width: 32px; height: 32px; }
.i14x20 { width: 14px; height: 20px; }
.i16x20 { width: 16px; height: 20px; }
.i18x20 { width: 18px; height: 20px; }
.i18x16 { width: 18px; height: 16px; }
.caret { width: 8px; height: 5px; }

/* Title bar */
.titlebar {
  display: flex;
  align-items: flex-end;
  flex: none;
  height: 10px;
  padding: 0 0 6px 9px;
  background: #d9dfde;
  white-space: nowrap;
  overflow: hidden;
}
.brand { margin: 0 25px -3px 7px; font-size: 15px; font-weight: 700; }
.quick { display: flex; align-items: flex-end; gap: 12px; }
.q { width: 13px; height: 14px; background: #eceeee; border: 1px solid #a7abab; }
.ok { background: #9ccf5c; border-radius: 8px; }
.save { background: #8793a0; border-color: #4a5a68; }
.arc { border-width: 0 2px 0 0; background: none; border-radius: 8px; }
.win { background: #fff; border-color: #2f7799; }
.doc { margin: 0 -18px -3px auto; color: #a3a8a8; }

/* Tabs */
.tabs { display: flex; flex: none; height: 29px; background: #3d4646; color: #fff; font-size: 13px; }
.file { width: 66px; background: linear-gradient(170deg, #65cf43, #52a738); }
.active.tab { width: 73px; background: #f8f9fb; color: #3c7a24; }
.rest { display: flex; gap: 47px; padding-left: 23px; }

/* Ribbon */
.ribbon { display: flex; flex: none; height: 113px; padding-top: 1px; border-bottom: 1px solid #a9b7b8; overflow: hidden; }
.group { display: flex; flex-direction: column; flex: none; padding: 0 7px; border-right: 1px solid #b4b9bb; height: 109px; }
.body { display: flex; flex: 1; gap: 8px; }
.snug { padding-right: 6px; }
.col { display: flex; flex-direction: column; }
.tool { display: flex; align-items: center; gap: 4px; height: 28px; }
.tool .caret { margin-left: 2px; }
.tool:disabled .caret { color: #96999a; }
.big { display: flex; flex-direction: column; align-items: center; padding-top: 4px; min-width: 32px; align-self: flex-start; }
.big .i32 { margin-bottom: 11px; }
.big .caret { margin-top: 5px; }
.name { display: flex; align-items: center; justify-content: center; gap: 3px; height: 22px; color: #333637; }
.wide { min-width: 120px; }

/* Sidebar */
.work { display: flex; flex: 1; min-height: 0; }
.side { width: 276px; flex: none; border-right: 3px solid #d9dfde; background: #f8fafb; }
.side-tabs { display: flex; height: 30px; background: #d9dfde; }
.side-tab { display: flex; align-items: center; gap: 4px; padding: 0 9px 0 7px; }
.side-tab.active { gap: 7px; padding-left: 10px; background: #f8fafb; }
.side-tab.fav { gap: 5px; padding-left: 8px; }
.side-head { display: flex; align-items: center; gap: 11px; height: 28px; padding: 0 5px 0 28px; }
.side-head h2 { flex: 1; margin: 0; font-size: 12px; font-weight: 500; color: #222; }
.side-head .plain { display: flex; align-items: center; gap: 8px; }
.filter { display: flex; align-items: center; gap: 4px; padding: 0 9px 0 12px; }
.filter .plain { margin: 0 4px 0 2px; }
.search { display: flex; flex: 1; align-items: center; height: 29px; border: 1px solid #9aabab; background: #fff; }
.search input { flex: 1; min-width: 0; height: 26px; border: 0; outline: 0; background: none; }
.tree { margin: 5px 5px 0 8px; padding: 0 0 6px; list-style: none; border-bottom: 2px solid #62c546; }
.tree li { display: flex; align-items: center; height: 22px; padding-left: 6px; }
.tree li svg { margin-right: 7px; }
.tree i { width: 11px; height: 9px; margin-right: 6px; }
.open { background: #85888a; clip-path: polygon(0 10%, 100% 10%, 50% 100%); }
.shut { background: #85888a; clip-path: polygon(20% 0, 85% 50%, 20% 100%); }
.tree .root { padding-left: 4px; }
.tree .root svg { margin-right: 8px; }
.tree .l2 { padding-left: 26px; }
.tree .l3 { padding-left: 46px; }
.tree .l4 { padding-left: 66px; }
.tree span { padding: 2px; height: 20px; }
.off { color: #bfc1c2; }
.csys { color: #c3bda9; background: #efefef; }
.picked span { background: #addfff; color: #303435; }

/* Model view */
.view { position: relative; flex: 1; min-width: 0; background: #95a0b0; overflow: hidden; }
.scene { position: absolute; inset: 0; width: 100%; height: 100%; }
.viewbar {
  position: absolute;
  top: 8px;
  left: 583px;
  display: flex;
  align-items: center;
  gap: 10px;
  height: 31px;
  padding: 0 7px;
  border: 1px solid #b9bec4;
  background: #f8f9fb;
}
.viewbar button { width: 16px; }

.dialog {
  position: absolute;
  top: 149px;
  left: 92px;
  border: 1px solid #8a8f96;
  background: #eeeff1;
  box-shadow: 2px 3px 7px rgba(30, 36, 46, .6);
}
.dlg-head { display: flex; align-items: center; height: 31px; padding: 0 10px 0 19px; background: #d9dddf; }
.dlg-head h1 { flex: 1; margin: 0; font-size: 12px; font-weight: 400; text-align: center; color: #222; }
.dlg-body { display: flex; flex-direction: column; align-items: flex-start; gap: 5px; padding: 16px 12px 15px 12px; border-bottom: 1px solid #c3c6c8; }
.dlg-body label { display: flex; align-items: center; gap: 5px; height: 22px; }
.dlg-body span { padding: 2px 1px; border: 1px solid transparent; white-space: nowrap; }
.dlg-body .focus { padding-right: 2px; border: 1px dotted #111; }
.dlg-body input { appearance: none; position: relative; width: 12px; height: 12px; margin: 0; border: 1px solid #7c7f81; background: #fff; }
.dlg-body input:checked::after { content: ""; position: absolute; left: 3px; top: 0; width: 4px; height: 8px; border: solid #222; border-width: 0 2px 2px 0; transform: rotate(40deg); }
.dlg-foot { display: flex; justify-content: flex-end; gap: 8px; padding: 10px 10px 11px; }
.btn { width: 62px; height: 25px; border: 1px solid #a9acae; background: #f7f7f7; }
.primary { border-color: #62c2f5; background: #a3dfff; }

.mark { position: absolute; left: 60px; top: 244px; width: 306px; height: 14px; }

.stamp {
  position: absolute;
  top: 749px;
  left: 521px;
  display: flex;
  width: 206px;
  height: 62px;
  background: rgba(255, 255, 255, .35);
}
.stamp svg { width: 60px; height: 62px; }
.words { display: flex; flex-direction: column; align-items: center; }
.words strong { font: 700 29px/40px "Noto Sans CJK SC", sans-serif; color: #5ba58a; }
.words span { font-size: 15px; line-height: 18px; color: #93b9c5; }
```
